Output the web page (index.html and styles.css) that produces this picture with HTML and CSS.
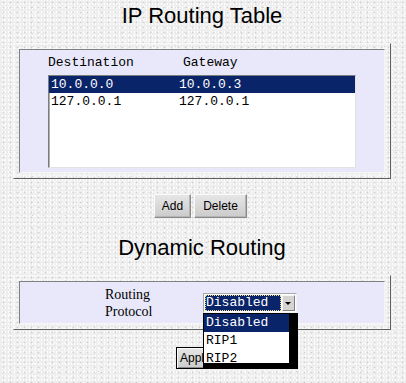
FILE: index.html
```html
<!DOCTYPE html>
<html lang="en">
<head>
  <meta charset="UTF-8" />
  <title>IP Routing</title>
  <link rel="stylesheet" href="styles.css">
</head>
<body>

  <h1 class="title">IP Routing Table</h1>

  <div class="frame">
    <div class="panel panel-table">
      <div class="table-head">
        <span class="head-dest">Destination</span>
        <span>Gateway</span>
      </div>
      <ul class="route-list">
        <li class="selected"><span class="col-dest">10.0.0.0</span><span>10.0.0.3</span></li>
        <li><span class="col-dest">127.0.0.1</span><span>127.0.0.1</span></li>
      </ul>
    </div>
  </div>

  <div class="buttons">
    <button class="btn btn-add">Add</button>
    <button class="btn btn-delete">Delete</button>
  </div>

  <h1 class="title title-dynamic">Dynamic Routing</h1>

  <div class="frame">
    <div class="panel panel-dynamic">
      <div class="label">Routing<br>Protocol</div>
      <div class="select">
        <div class="select-box">
          <span class="select-value">Disabled</span>
          <span class="select-arrow"></span>
        </div>
        <ul class="select-options">
          <li class="selected">Disabled</li>
          <li>RIP1</li>
          <li>RIP2</li>
        </ul>
      </div>
    </div>
  </div>

  <div class="buttons buttons-apply">
    <button class="btn btn-apply">Apply</button>
  </div>

</body>
</html>
```

FILE: styles.css
```css
* { box-sizing: border-box; }

body {
  margin: 0;
  padding: 3px 0 0;
  background-color: #eeeeee;
  background-image:
    radial-gradient(circle, #cfcfcf 0.7px, transparent 1.1px),
    radial-gradient(circle, #fbfbfb 0.8px, transparent 1.2px),
    radial-gradient(circle, #d8d8d8 0.6px, transparent 1px),
    radial-gradient(circle, #ffffff 0.7px, transparent 1.1px);
  background-size: 7px 5px, 5px 7px, 11px 13px, 3px 4px;
  background-position: 0 0, 2px 3px, 5px 1px, 1px 2px;
  font-family: 'Liberation Sans', Arial, sans-serif;
  color: #000;
}

.title {
  margin: 0;
  font-size: 22px;
  font-weight: normal;
  line-height: 26px;
  text-align: center;
  padding-right: 2px;
}

.title-dynamic {
  margin-top: 17px;
}

.frame {
  width: 378px;
  margin: 14px 0 0 13px;
  padding: 5px;
  border: 1px solid;
  border-color: #f8f8f8 #606060 #606060 #f8f8f8;
}

.panel {
  background: #e9e8fa;
  border: 1px solid;
  border-color: #808080 #f6f6f6 #f6f6f6 #808080;
}

/* tabla de rutas */
.panel-table {
  padding: 5px 28px 4px;
}

.table-head {
  display: flex;
  height: 16px;
  font: 13px/16px 'Liberation Mono', 'Courier New', monospace;
  white-space: pre;
}

.head-dest {
  width: 135px;
}

.route-list {
  list-style: none;
  margin: 4px 0 0;
  padding: 0;
  height: 93px;
  background: #fff;
  border: 1px solid;
  border-color: #7c7c7c #e2e2e2 #e2e2e2 #7c7c7c;
  box-shadow: inset 1px 1px 0 #b0b0b0;
  font: 13px/17px 'Liberation Mono', 'Courier New', monospace;
}

.route-list li {
  display: flex;
  height: 17px;
  padding-left: 2px;
  white-space: pre;
}

.route-list li.selected {
  background: #0a246a;
  color: #fff;
}

.col-dest {
  width: 128px;
}

/* botones */
.buttons {
  display: flex;
  justify-content: center;
  gap: 3px;
  margin-top: 15px;
  padding-right: 5px;
}

.btn {
  height: 24px;
  padding: 0;
  font: 12px 'Liberation Sans', Arial, sans-serif;
  color: #000;
  background: linear-gradient(#e6e6e6, #cbcbcb);
  border: 1px solid;
  border-color: #fafafa #8a8a8a #8a8a8a #fafafa;
  box-shadow: inset -1px -1px 0 #b4b4b4;
}

.btn-add { width: 37px; }
.btn-delete { width: 53px; }

.buttons-apply {
  margin-top: 17px;
  padding-right: 4px;
}

.btn-apply {
  width: 50px;
  height: 22px;
  padding-left: 3px;
  text-align: left;
  border: 1px solid #000;
  box-shadow: inset 1px 1px 0 #fafafa, inset -1px -1px 0 #8a8a8a;
}

/* enrutamiento dinamico */
.panel-dynamic {
  display: flex;
  align-items: center;
  height: 43px;
  padding-left: 85px;
}

.label {
  width: 98px;
  font: 14px/17px 'Liberation Serif', 'Times New Roman', serif;
}

.select {
  position: relative;
  z-index: 1;
  width: 94px;
  height: 20px;
  font: 13px/16px 'Liberation Mono', 'Courier New', monospace;
}

.select-box {
  display: flex;
  gap: 1px;
  height: 20px;
  padding: 1px;
  background: #fff;
  border: 1px solid;
  border-color: #a8a8a8 #f2f2f2 #f2f2f2 #a8a8a8;
}

.select-value {
  width: 76px;
  padding-left: 1px;
  background: #0a246a;
  color: #fff;
  outline: 1px dotted #f0dc90;
  outline-offset: -1px;
}

.select-arrow {
  position: relative;
  width: 13px;
  background: #d6d4d0;
  border: 1px solid;
  border-color: #f4f4f4 #808080 #808080 #f4f4f4;
}

.select-arrow::after {
  content: '';
  position: absolute;
  left: 2px;
  top: 6px;
  border-left: 3px solid transparent;
  border-right: 3px solid transparent;
  border-top: 3px solid #000;
}

.select-options {
  position: absolute;
  left: 0;
  top: 20px;
  width: 95px;
  height: 56px;
  margin: 0;
  padding: 0;
  list-style: none;
  overflow: hidden;
  background: #fff;
  border-style: solid;
  border-color: #000;
  border-width: 1px 9px 6px 1px;
  line-height: 18px;
}

.select-options li {
  height: 18px;
  padding-left: 2px;
}

.select-options li.selected {
  background: #0a246a;
  color: #fff;
}
```
